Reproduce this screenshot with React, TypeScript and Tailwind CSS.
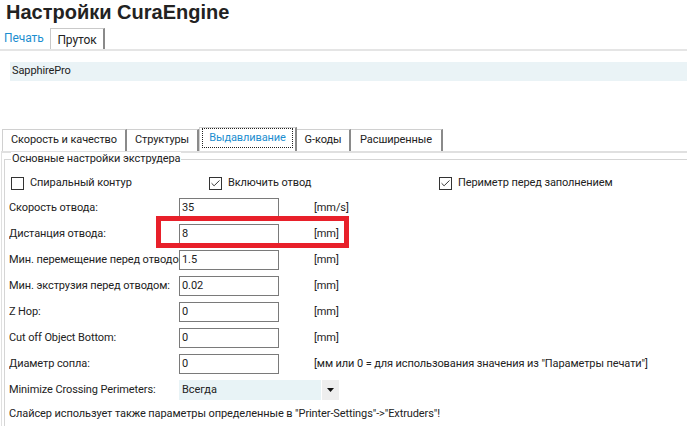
import { Check } from "lucide-react";

const font = { fontFamily: 'Roboto, "Liberation Sans", Arial, sans-serif' };

type Row = { label: string; value: string; unit: string };

const rows: Row[] = [
  { label: "Скорость отвода:", value: "35", unit: "[mm/s]" },
  { label: "Дистанция отвода:", value: "8", unit: "[mm]" },
  { label: "Мин. перемещение перед отводом:", value: "1.5", unit: "[mm]" },
  { label: "Мин. экструзия перед отводом:", value: "0.02", unit: "[mm]" },
  { label: "Z Hop:", value: "0", unit: "[mm]" },
  { label: "Cut off Object Bottom:", value: "0", unit: "[mm]" },
  {
    label: "Диаметр сопла:",
    value: "0",
    unit: '[мм или 0 = для использования значения из "Параметры печати"]',
  },
];

function CheckBox({ checked, label }: { checked: boolean; label: string }) {
  return (
    <div className="flex items-center gap-[6px]">
      <div className="flex h-[13px] w-[13px] items-center justify-center border border-[#333] bg-white">
        {checked && <Check className="h-[11px] w-[11px] text-[#222]" strokeWidth={2} />}
      </div>
      <span>{label}</span>
    </div>
  );
}

export default function App() {
  return (
    <div
      className="relative h-[426px] w-[687px] overflow-hidden bg-white text-[11px] tracking-[-0.1px] text-[#222]"
      style={font}
    >
      {/* Title */}
      <h1
        className="ml-[6px] h-[25px] pt-[1px] text-[20px] font-bold leading-[22px] tracking-normal text-[#222]"
        style={{ fontFamily: '"Liberation Sans", Arial, sans-serif' }}
      >
        Настройки CuraEngine
      </h1>

      {/* Top tabs */}
      <div className="flex h-[26px] items-end border-b-2 border-[#e5e5e5]">
        <div className="flex h-[26px] w-[50px] items-center pl-[4px] pt-[3px] text-[12px] text-[#1c8ed0]">
          Печать
        </div>
        <div className="flex h-[21px] w-[55px] items-center justify-center border border-b-0 border-r-2 border-[#c9c9c9] border-r-[#8a8a8a] bg-white pt-[2px] text-[12px]">
          Пруток
        </div>
      </div>

      {/* Printer name */}
      <div className="ml-[10px] mt-[11px] flex h-[19px] items-center bg-[#eaf3f6] pl-[2px]">
        SapphirePro
      </div>

      {/* Sub tabs */}
      <div className="mt-[46px] flex h-[24px] items-end pl-[2px]">
        <div className="flex h-[22px] w-[125px] items-center justify-center border border-b-0 border-r-2 border-[#d0d0d0] border-r-[#8a8a8a]">
          Скорость и качество
        </div>
        <div className="flex h-[22px] w-[72px] items-center justify-center border border-b-0 border-l-0 border-r-2 border-[#d0d0d0] border-r-[#8a8a8a]">
          Структуры
        </div>
        <div className="flex h-[24px] w-[98px] items-center justify-center border border-b-0 border-[#d0d0d0] border-r-2 border-r-[#8a8a8a] px-[2px] pb-[3px]">
          <div className="flex h-full w-full items-center justify-center border border-dotted border-[#222] text-[#1c8ed0]">
            Выдавливание
          </div>
        </div>
        <div className="flex h-[22px] w-[54px] items-center justify-center border border-b-0 border-l-0 border-r-2 border-[#d0d0d0] border-r-[#8a8a8a]">
          G-коды
        </div>
        <div className="flex h-[22px] w-[92px] items-center justify-center border border-b-0 border-l-0 border-r-2 border-[#d0d0d0] border-r-[#8a8a8a]">
          Расширенные
        </div>
      </div>

      {/* Tab page */}
      <div className="ml-[1px] h-[280px] border-l border-t-2 border-[#e0e0e0] pt-[6px]">
        <div className="relative ml-[2px] h-[270px] border-l border-t border-[#d5d5d5]">
          <span className="absolute -top-[8px] left-[6px] bg-white px-[1px] leading-[14px]">
            Основные настройки экструдера
          </span>

          <div className="flex h-[37px] items-center pt-[9px] pl-[6px]">
            <div className="w-[198px]">
              <CheckBox checked={false} label="Спиральный контур" />
            </div>
            <div className="w-[230px]">
              <CheckBox checked label="Включить отвод" />
            </div>
            <CheckBox checked label="Периметр перед заполнением" />
          </div>

          <div className="flex flex-col gap-[6px] pl-[4px] pt-[1px]">
            {rows.map((r) => (
              <div key={r.label} className="flex h-[20px] items-center">
                <div className="w-[170px] overflow-hidden whitespace-nowrap">{r.label}</div>
                <div className="flex h-[20px] w-[100px] items-center border border-[#7a7a7a] pl-[2px]">
                  {r.value}
                </div>
                <div className="ml-[35px] whitespace-nowrap">{r.unit}</div>
              </div>
            ))}

            <div className="flex h-[20px] items-center">
              <div className="w-[170px] whitespace-nowrap">Minimize Crossing Perimeters:</div>
              <div className="flex h-[20px] w-[142px] items-center bg-[#e8f3f6] pl-[3px]">
                Всегда
              </div>
              <div className="ml-[1px] flex h-[20px] w-[17px] items-center justify-center bg-[#eeeeee]">
                <svg width="7" height="4" viewBox="0 0 7 4">
                  <path d="M0 0 H7 L3.5 4 Z" fill="#111" />
                </svg>
              </div>
            </div>

            <div className="mt-[0px] whitespace-nowrap">
              Слайсер использует также параметры определенные в "Printer-Settings"-&gt;"Extruders"!
            </div>
          </div>
        </div>
      </div>

      {/* Highlight frame */}
      <div className="absolute left-[156px] top-[216px] h-[32px] w-[193px] border-[5px] border-[#e8202a]" />
    </div>
  );
}
